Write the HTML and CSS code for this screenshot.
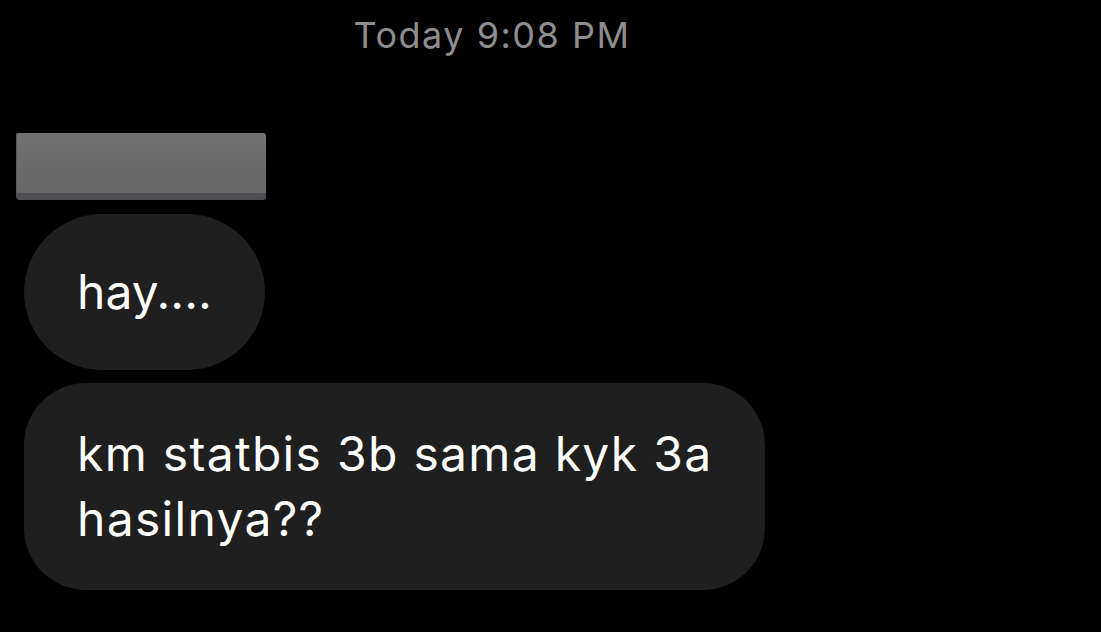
FILE: index.html
```html
<!DOCTYPE html>
<html>
<head>
<meta charset="utf-8">
<link rel="stylesheet" href="styles.css">
</head>
<body>
<div class="chat">
  <div class="stamp">Today 9:08 PM</div>
  <div class="thread">
    <div class="redact"></div>
    <div class="bubble short">hay....</div>
    <div class="bubble long">km statbis 3b sama kyk 3a hasilnya??</div>
  </div>
</div>
</body>
</html>
```
FILE: styles.css
```css
html, body {
  margin: 0;
  padding: 0;
  background: #000;
}
body {
  width: 1101px;
  height: 632px;
  overflow: hidden;
  font-family: Inter, "Liberation Sans", sans-serif;
}
.chat {
  display: flex;
  flex-direction: column;
}
.stamp {
  width: 984px;
  text-align: center;
  color: #8e8e8e;
  font-size: 36px;
  letter-spacing: 1.5px;
  line-height: 40px;
  padding-top: 15px;
}
.thread {
  display: flex;
  flex-direction: column;
  align-items: flex-start;
  padding-left: 24px;
  margin-top: 78px;
}
.redact {
  width: 250px;
  height: 60px;
  margin-left: -8px;
  background: linear-gradient(180deg, #727272 0%, #6a6a6a 60%, #676767 100%);
  border-bottom: 7px solid #4f4f52;
  border-radius: 2px 3px 3px 4px;
  box-shadow: inset 1px 0 0 #5a5a62;
}
.bubble {
  background: #1f1f1f;
  color: #fff;
  font-size: 48px;
  box-sizing: border-box;
  width: fit-content;
}
.short {
  margin-top: 14px;
  height: 156px;
  border-radius: 78px;
  padding: 0 53px;
  display: flex;
  align-items: center;
  line-height: 60px;
}
.long {
  margin-top: 13px;
  width: 741px;
  border-radius: 62px;
  padding: 38px 40px 39px 53px;
  line-height: 65px;
  letter-spacing: 1.3px;
}
```
